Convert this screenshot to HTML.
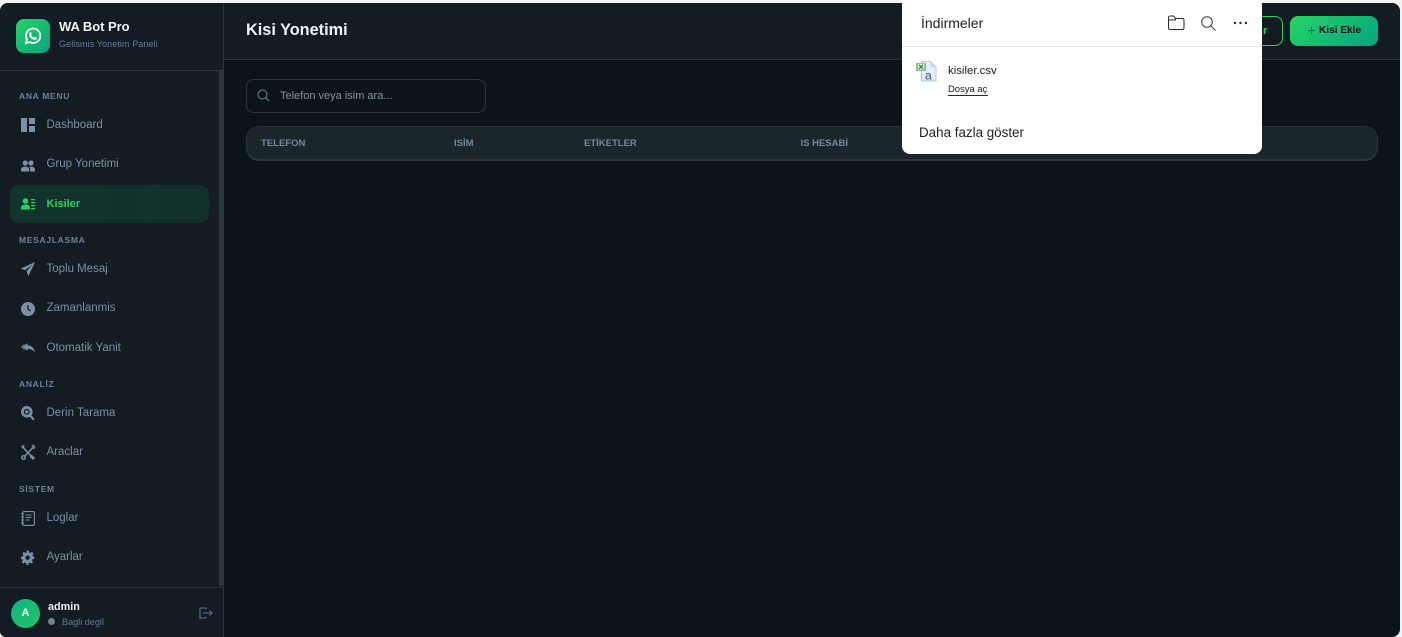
<!DOCTYPE html>
<html lang="tr"><head><meta charset="utf-8"><title>Kisi Yonetimi</title>
<style>
*{box-sizing:border-box;margin:0;padding:0}
html,body{width:1402px;height:637px;overflow:hidden;background:#f2f2f2;font-family:"Liberation Sans",sans-serif}
.abs,.t{position:absolute}
.t{white-space:nowrap;line-height:1}
#app{position:absolute;left:0;top:3px;width:1400px;height:634px;background:#0c141b;border-radius:8px 8px 8px 6px;overflow:hidden}
#side{position:absolute;left:0;top:0;width:224px;height:634px;background:#131b23;border-right:1px solid #2a3640}
#head{position:absolute;left:224px;top:0;width:1176px;height:57px;background:#131b23;border-bottom:1px solid #2a3640}
.sec{font-size:8.5px;font-weight:700;letter-spacing:.7px;color:#6f8299}
.nav{font-size:11.5px;color:#7e8fa3}
svg{position:absolute;overflow:visible}
.th{font-size:9.5px;font-weight:700;letter-spacing:0;color:#75879a;top:139px}
.dl{color:#222}
</style></head><body>
<div id="app">
<div id="side"></div>
<div id="head"></div>
</div>

<!-- sidebar structure -->
<div class="abs" style="left:0;top:70px;width:223px;height:1px;background:#2a3640"></div>
<div class="abs" style="left:0;top:587px;width:223px;height:1px;background:#2a3640"></div>
<div class="abs" style="left:219px;top:71px;width:4px;height:515px;background:#2a3640"></div>

<!-- logo -->
<div class="abs" style="left:16px;top:19px;width:34px;height:34px;border-radius:8px;background:linear-gradient(135deg,#25d366,#05a57e)"></div>
<svg style="left:24px;top:27px" width="18" height="18" viewBox="0 0 24 24"><path fill="none" stroke="#fff" stroke-width="2.4" d="M2.5 21.5l1.4-5A9.6 9.6 0 1 1 7.6 20.1z"/><path fill="#fff" d="M8.6 6.9c.5 0 .8 0 1 .5l.8 1.8c.1.3 0 .6-.2.9l-.7.8c.8 1.5 2 2.7 3.8 3.5l.9-1c.3-.3.5-.3.8-.2l1.8.9c.4.2.5.4.4.9-.2 1.4-1.5 2.2-2.8 2.1-3.9-.4-7.3-3.6-7.5-6.8-.1-1.2.8-3.3 1.7-3.4z"/></svg>
<div class="t" style="left:59px;top:20px;font-size:13px;font-weight:700;color:#f3f5f7;letter-spacing:-.05px">WA Bot Pro</div>
<div class="t" style="left:59px;top:40px;font-size:9px;color:#667a92;letter-spacing:.1px">Gelismis Yonetim Paneli</div>

<!-- section labels -->
<div class="t sec" style="left:19px;top:92px">ANA MENU</div>
<div class="t sec" style="left:19px;top:236px">MESAJLASMA</div>
<div class="t sec" style="left:19px;top:380px">ANALİZ</div>
<div class="t sec" style="left:19px;top:485px">SİSTEM</div>

<!-- active row -->
<div class="abs" style="left:10px;top:185px;width:199px;height:38px;border-radius:9px;background:linear-gradient(90deg,#10352b,#12302c)"></div>

<!-- nav -->
<div class="t nav" style="left:46.5px;top:120px">Dashboard</div>
<div class="t nav" style="left:46.5px;top:159px">Grup Yonetimi</div>
<div class="t nav" style="left:46.5px;top:199px;color:#25d366;font-weight:700;font-size:11px">Kisiler</div>
<div class="t nav" style="left:46.5px;top:264px">Toplu Mesaj</div>
<div class="t nav" style="left:46.5px;top:303px">Zamanlanmis</div>
<div class="t nav" style="left:46.5px;top:343px">Otomatik Yanit</div>
<div class="t nav" style="left:46.5px;top:408px">Derin Tarama</div>
<div class="t nav" style="left:46.5px;top:447px">Araclar</div>
<div class="t nav" style="left:46.5px;top:513px">Loglar</div>
<div class="t nav" style="left:46.5px;top:552px">Ayarlar</div>

<!-- nav icons -->
<svg style="left:21px;top:118px" width="14" height="14" viewBox="0 0 14 14" fill="#7e8fa3"><path d="M0 0h6v14H0zM8 0h6v6H8zM8 8h6v6H8z"/></svg>
<svg style="left:21px;top:160px" width="14" height="12" viewBox="0 0 14 12" fill="#7e8fa3"><circle cx="4.2" cy="3" r="2.6"/><circle cx="10" cy="3" r="2.6"/><path d="M0 11.5V9.6C0 7.6 2 6.6 4.2 6.6s3.9 1 3.9 3v1.900zM9 11.500V9.400c0-1-.4-1.900-1-2.500.6-.2 1.300-.3 2-.3 2.200 0 4 1 4 3v1.900z"/></svg>
<svg style="left:21px;top:198px" width="14" height="12" viewBox="0 0 14 12" fill="#25d366"><circle cx="4.500" cy="3" r="2.800"/><path d="M0 11.500V9.500C0 7.500 2.200 6.500 4.500 6.500S9 7.500 9 9.500v2zM10 1h4v1.200h-4zM10 4h4v1.200h-4zM10 7h4v1.200h-4zM10 10h4v1.200h-4z"/></svg>
<svg style="left:21px;top:262px" width="14" height="14" viewBox="0 0 14 14" fill="#7e8fa3"><path d="M14 0L0 6.500l3.800 1.800L11 3 5.500 9.300l2 4.700z"/></svg>
<svg style="left:21px;top:302px" width="14" height="14" viewBox="0 0 14 14"><circle cx="7" cy="7" r="7" fill="#7e8fa3"/><path d="M7 3v4.300l2.600 1.500" fill="none" stroke="#131b23" stroke-width="1.200"/></svg>
<svg style="left:21px;top:343px" width="14" height="10" viewBox="0 0 14 10" fill="#7e8fa3"><path d="M6.500 0L2 4l4.500 4V5.800c3 0 5.400 1 7.500 3.700C13.400 5 10.500 2.600 6.500 2.200zM3.500 1L0 4l3.500 3 .6-.6L1.600 4l2.500-2.400z"/></svg>
<svg style="left:21px;top:406px" width="14" height="15" viewBox="0 0 14 15"><circle cx="5.800" cy="5.800" r="4.400" fill="#131b23" stroke="#7e8fa3" stroke-width="2.800"/><circle cx="5.800" cy="5.800" r="1.700" fill="#7e8fa3"/><path d="M9 9.500l4 4.200" stroke="#7e8fa3" stroke-width="2.200" fill="none"/></svg>
<svg style="left:21px;top:445px" width="14" height="15" viewBox="0 0 14 15" fill="none" stroke="#7e8fa3" stroke-width="1.500"><circle cx="2.500" cy="12.500" r="1.800"/><path d="M3.800 11.200L12 2.500M1.200 1.500l11.300 12" /><path d="M9.500 10.500l3.500 3.500" stroke-width="3"/><path d="M11 1.500l1.500-1 1 2-1.500 1.200" stroke-width="1.500"/><path d="M3 .5L.8 2.700" stroke-width="2.200"/></svg>
<svg style="left:21px;top:511px" width="14" height="15" viewBox="0 0 14 15" fill="none" stroke="#7e8fa3" stroke-width="1.100"><rect x="1.600" y=".6" width="11.800" height="13.800" rx="1.500"/><path d="M4.500 4h6M4.500 6.500h6M4.500 9h4M0 3h3M0 6h3M0 9h3M0 12h3"/></svg>
<svg style="left:21px;top:549.500px" width="14" height="15" viewBox="0 0 24 24" fill="#7e8fa3"><path fill-rule="evenodd" d="M10 0h4l.7 3.500 2 .9 3-2 2.900 2.900-2 3 .9 2L24 11v4l-3.500.7-.9 2 2 3-2.900 2.900-3-2-2 .9L13.900 26h-4l-.7-3.500-2-.9-3 2-2.900-2.900 2-3-.9-2L0 15v-4l3.500-.7.9-2-2-3 2.900-2.900 3 2 2-.9zM12 9a4 4 0 1 0 0 8 4 4 0 0 0 0-8z" transform="scale(.95)"/></svg>

<!-- user -->
<div class="abs" style="left:11px;top:599px;width:29px;height:29px;border-radius:50%;background:linear-gradient(135deg,#0fb57f,#25c26e)"></div>
<div class="t" style="left:11px;top:608px;width:29px;text-align:center;font-size:11px;font-weight:700;color:#fff">A</div>
<div class="t" style="left:48px;top:601.500px;font-size:10.800px;font-weight:700;color:#f0f2f5">admin</div>
<div class="abs" style="left:48px;top:618px;width:7px;height:7px;border-radius:50%;background:#75828f"></div>
<div class="t" style="left:62px;top:617.500px;font-size:9.100px;color:#667a92">Bagli degil</div>
<svg style="left:199px;top:607px" width="14" height="12" viewBox="0 0 14 12" fill="none" stroke="#5e7290" stroke-width="1.100"><path d="M7 2.500V1H1v10h6V9.500M4 6h9M10.500 3.500L13 6l-2.500 2.500"/></svg>

<!-- header -->
<div class="t" style="left:246px;top:22px;font-size:16.300px;font-weight:700;color:#f2f4f6">Kisi Yonetimi</div>
<div class="abs" style="left:1200px;top:16px;width:83px;height:30px;border:1px solid #25d366;border-radius:8px"></div>
<div class="t" style="left:1263px;top:25.500px;font-size:11px;font-weight:700;color:#25d366">r</div>
<div class="abs" style="left:1290px;top:16px;width:88px;height:30px;border-radius:8px;background:linear-gradient(135deg,#25d366,#05a57e)"></div>
<svg style="left:1308px;top:27px" width="7" height="7" viewBox="0 0 7 7"><path d="M3.500 0v7M0 3.500h7" stroke="#147a4f" stroke-width="1"/></svg>
<div class="t" style="left:1319px;top:25.500px;font-size:10.100px;font-weight:700;color:#0c141b">Kisi Ekle</div>

<!-- search -->
<div class="abs" style="left:246px;top:79px;width:240px;height:34px;border:1px solid #2a3640;border-radius:8px;background:#0c141b"></div>
<svg style="left:257px;top:89px" width="13" height="13" viewBox="0 0 13 13" fill="none" stroke="#75879a" stroke-width="1"><circle cx="5.500" cy="5.500" r="4.500"/><path d="M8.800 8.800l3.600 3.600"/></svg>
<div class="t" style="left:280px;top:90.500px;font-size:11px;color:#85939f">Telefon veya isim ara...</div>

<!-- table head -->
<div class="abs" style="left:246px;top:126px;width:1132px;height:35px;border-radius:13px;background:#1a252c;border:1px solid #26323b;border-bottom:2px solid #2a3640"></div>
<div class="t th" style="left:261px">TELEFON</div>
<div class="t th" style="left:454px">ISİM</div>
<div class="t th" style="left:584px">ETİKETLER</div>
<div class="t th" style="left:800.500px">IS HESABİ</div>

<!-- download popup -->
<div class="abs" style="left:902px;top:0;width:360px;height:154px;background:#fff;border-radius:0 0 8px 8px"></div>
<div class="abs" style="left:902px;top:46px;width:360px;height:1px;background:#e8e8e8"></div>
<div class="t dl" style="left:921px;top:16px;font-size:14px">İndirmeler</div>
<svg style="left:1167px;top:15px" width="18" height="16" viewBox="0 0 18 16" fill="none" stroke="#2b2b2b" stroke-width="1"><path d="M1.500 2.500a1.500 1.500 0 0 1 1.500-1.500h3.500l2 2.500H15.500a1.500 1.500 0 0 1 1.500 1.500v8a1.500 1.500 0 0 1-1.500 1.500H3a1.500 1.500 0 0 1-1.500-1.500zM1.500 5H8.500l0-1.500"/></svg>
<svg style="left:1201px;top:16px" width="15" height="15" viewBox="0 0 15 15" fill="none" stroke="#3a3a3a" stroke-width="1"><circle cx="6" cy="6" r="5.300"/><path d="M9.800 9.800l4.700 4.700"/></svg>
<svg style="left:1233px;top:21px" width="15" height="4" viewBox="0 0 15 4" fill="#2b2b2b"><circle cx="2" cy="2" r="1.200"/><circle cx="7.500" cy="2" r="1.200"/><circle cx="13" cy="2" r="1.200"/></svg>

<svg style="left:916px;top:61px" width="21" height="21" viewBox="0 0 21 21"><path d="M5.500.5h9l5.500 5.500v14H5.500z" fill="#e6edf7" stroke="#b4c6de" stroke-width="1"/><path d="M14.500.5v5.500H20z" fill="#c5d6ec"/><rect x="0" y="2" width="10" height="8" fill="#8cc08c"/><rect x="2" y="3" width="6" height="5.500" fill="#e6f3e2"/><path d="M3 3.800l4 4M7 3.800l-4 4" stroke="#2d7a3c" stroke-width="1.100"/><text x="9" y="18.500" font-family="Liberation Sans,sans-serif" font-size="12" fill="#25527f">a</text></svg>
<div class="t dl" style="left:948px;top:65.500px;font-size:11.400px">kisiler.csv</div>
<div class="t" style="left:948px;top:85px;font-size:9.500px;color:#1a1a1a;letter-spacing:-.05px">Dosya aç</div>
<div class="abs" style="left:948px;top:95px;width:40px;height:1px;background:#0b2a5a"></div>
<div class="t dl" style="left:919px;top:126px;font-size:13.400px">Daha fazla göster</div>
</body></html>
